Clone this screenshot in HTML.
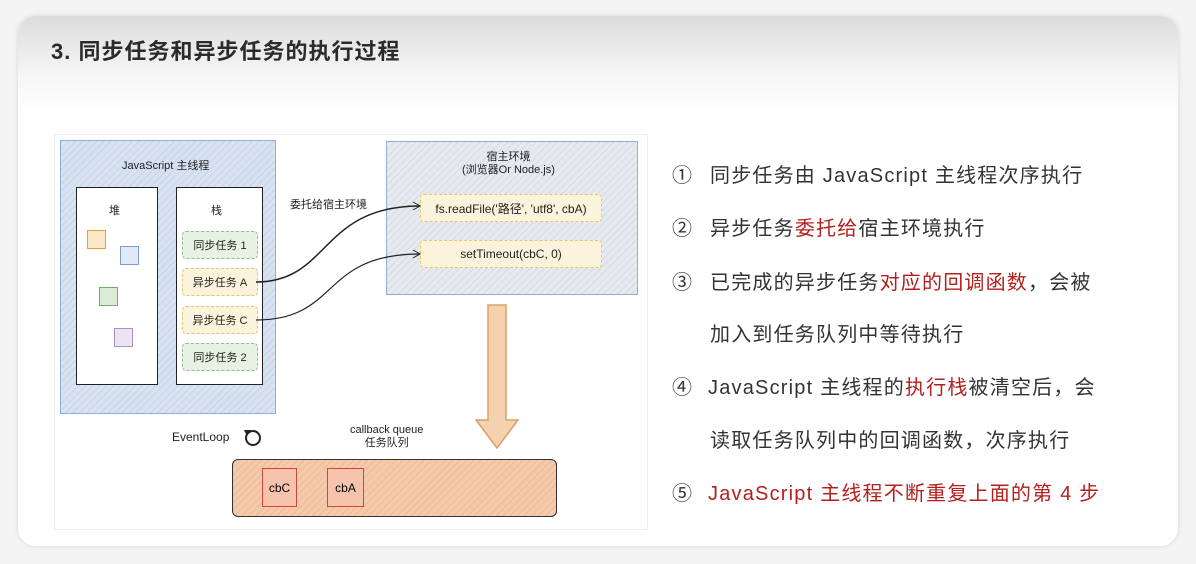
<!DOCTYPE html>
<html><head><meta charset="utf-8"><style>
body{margin:0;width:1196px;height:564px;background:#f4f4f4;position:relative;overflow:hidden;font-family:"Liberation Sans","Noto Sans CJK SC",sans-serif}
.card{position:absolute;left:18px;top:16px;width:1160px;height:530px;border-radius:18px;background:linear-gradient(#dcdcdc 0px,#f6f6f6 60px,#fff 95px,#fff);box-shadow:0 0 6px rgba(0,0,0,.12)}
.title{position:absolute;left:51px;top:34px;font-size:22px;font-weight:bold;color:#2b2b2b;letter-spacing:1px}
.a{position:absolute}
.t{position:absolute;font-size:20px;color:#333;letter-spacing:1.2px;white-space:nowrap}
.r{color:#b3201d}
.n{position:absolute;left:672px;font-size:20px;color:#333}
.hatch{background-image:repeating-linear-gradient(135deg,rgba(0,0,0,.06) 0 1px,transparent 1px 5px)}
.d{font-size:11px;color:#222;position:absolute;white-space:nowrap}
.item{position:absolute;left:182px;width:74px;height:26px;border:1px dashed;border-radius:4px;font-size:11px;display:flex;align-items:center;justify-content:center;color:#222}
.g{border-color:#8fc08a;background:#e8f2e4}
.y{border-color:#e2c870;background:#fbf3dc}
</style></head><body>
<div class="card"></div>
<div class="title">3. 同步任务和异步任务的执行过程</div>
<div class="a" style="left:54px;top:134px;width:592px;height:394px;background:#fff;border:1px solid #eee"></div>
<div class="a hatch" style="left:60px;top:140px;width:214px;height:272px;background-color:#d7e2f2;border:1.5px solid #8eaede"></div>
<div class="d" style="left:122px;top:157px">JavaScript 主线程</div>
<div class="a" style="left:76px;top:187px;width:80px;height:196px;background:#fff;border:1.5px solid #222"></div>
<div class="a" style="left:176px;top:187px;width:85px;height:196px;background:#fff;border:1.5px solid #222"></div>
<div class="d" style="left:109px;top:202px">堆</div>
<div class="d" style="left:211px;top:202px">栈</div>
<div class="a" style="left:87px;top:230px;width:17px;height:17px;border:1px solid #e0a23a;background:#fbe6c8"></div>
<div class="a" style="left:120px;top:246px;width:17px;height:17px;border:1px solid #7f9ed2;background:#e0e9f6"></div>
<div class="a" style="left:99px;top:287px;width:17px;height:17px;border:1px solid #6fae68;background:#dcecd6"></div>
<div class="a" style="left:114px;top:328px;width:17px;height:17px;border:1px solid #a991c8;background:#ece3f3"></div>
<div class="item g" style="top:231px">同步任务 1</div>
<div class="item y" style="top:268px">异步任务 A</div>
<div class="item y" style="top:306px">异步任务 C</div>
<div class="item g" style="top:343px">同步任务 2</div>
<div class="a hatch" style="left:386px;top:141px;width:250px;height:152px;background-color:#e6e9ef;border:1.5px solid #8eaede"></div>
<div class="d" style="left:462px;top:151px;text-align:center;line-height:13px">宿主环境<br>(浏览器Or Node.js)</div>
<div class="item y" style="left:420px;top:194px;width:180px;font-size:12px">fs.readFile('路径', 'utf8', cbA)</div>
<div class="item y" style="left:420px;top:240px;width:180px;font-size:12px">setTimeout(cbC, 0)</div>
<div class="d" style="left:290px;top:196px">委托给宿主环境</div>
<svg class="a" style="left:0;top:0" width="1196" height="564">
<path d="M256 282 C330 282 320 206 420 206" fill="none" stroke="#222" stroke-width="1.5"/>
<path d="M256 320 C340 320 320 254 420 254" fill="none" stroke="#222" stroke-width="1.2"/>
<path d="M413 202 L420 206 L413 210" fill="none" stroke="#222"/>
<path d="M413 250 L420 254 L413 258" fill="none" stroke="#222"/>
<path d="M488 305 L506 305 L506 420 L518 420 L497 448 L476 420 L488 420 Z" fill="#f5d2ae" stroke="#d9a066" stroke-width="1.5"/>
<circle cx="253" cy="438" r="7" fill="none" stroke="#222" stroke-width="2"/>
<path d="M244 430 L251 430 L247 436 Z" fill="#222"/>
</svg>
<div class="d" style="left:172px;top:430px;font-size:12px">EventLoop</div>
<div class="d" style="left:350px;top:424px;text-align:center;line-height:13px">callback queue<br>任务队列</div>
<div class="a hatch" style="left:232px;top:459px;width:323px;height:56px;background-color:#f6c9a8;border:1.5px solid #333;border-radius:6px"></div>
<div class="a" style="left:262px;top:468px;width:33px;height:37px;border:1.5px solid #d2453b;background:#f6c3ad;font-size:12px;display:flex;align-items:center;justify-content:center">cbC</div>
<div class="a" style="left:327px;top:468px;width:35px;height:37px;border:1.5px solid #d2453b;background:#f6c3ad;font-size:12px;display:flex;align-items:center;justify-content:center">cbA</div>
<div class="n" style="top:159px">①</div><div class="t" style="left:710px;top:159px">同步任务由 JavaScript 主线程次序执行</div>
<div class="n" style="top:212px">②</div><div class="t" style="left:710px;top:212px">异步任务<span class="r">委托给</span>宿主环境执行</div>
<div class="n" style="top:266px">③</div><div class="t" style="left:710px;top:266px">已完成的异步任务<span class="r">对应的回调函数</span>，会被</div>
<div class="t" style="left:710px;top:318px">加入到任务队列中等待执行</div>
<div class="n" style="top:371px">④</div><div class="t" style="left:708px;top:371px">JavaScript 主线程的<span class="r">执行栈</span>被清空后，会</div>
<div class="t" style="left:710px;top:424px">读取任务队列中的回调函数，次序执行</div>
<div class="n r" style="top:477px">⑤</div><div class="t r" style="left:708px;top:477px">JavaScript 主线程不断重复上面的第 4 步</div>
</body></html>
